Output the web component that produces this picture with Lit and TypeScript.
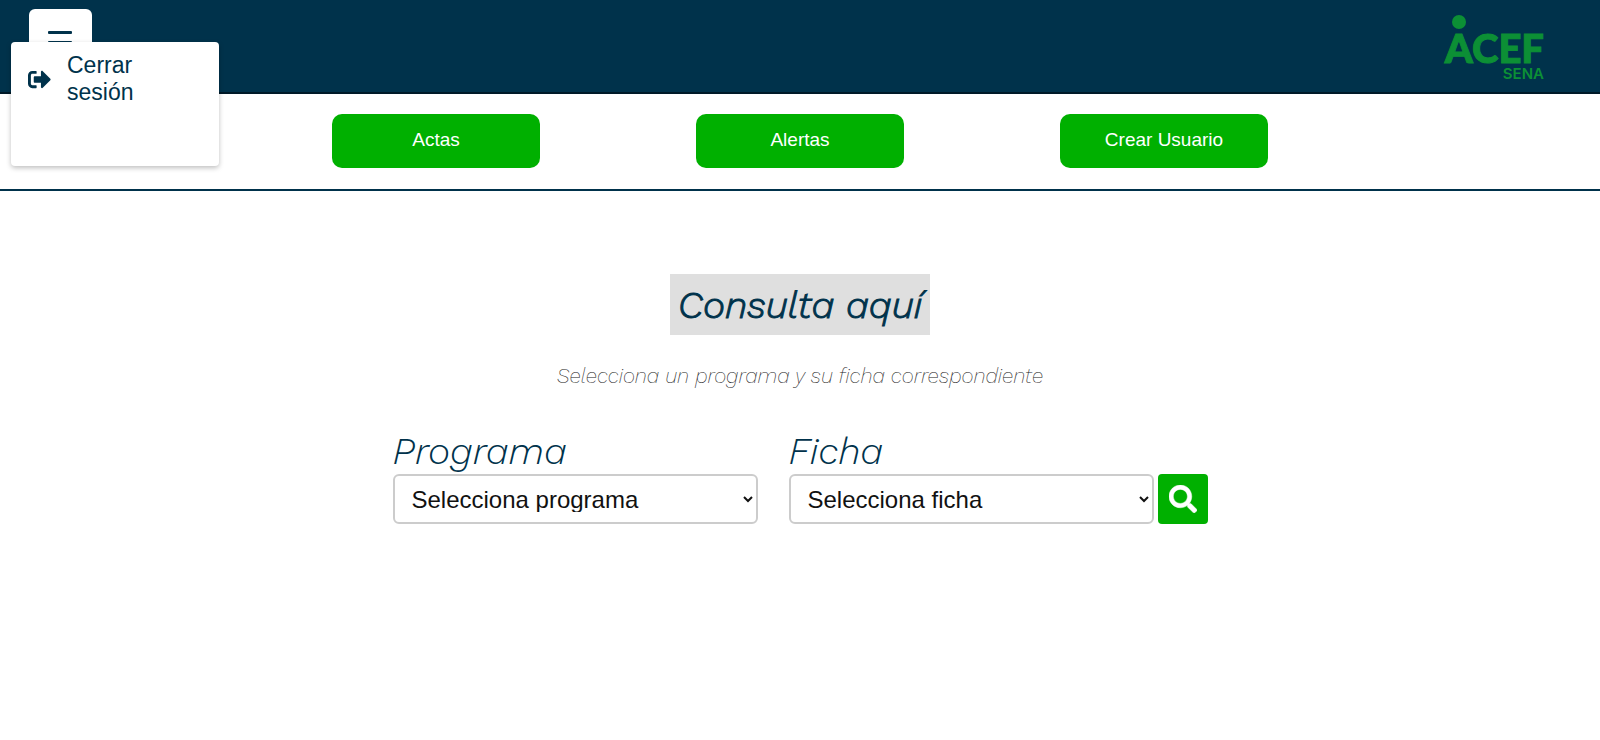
import { LitElement, html, css, svg } from "lit";
import { customElement, state } from "lit/decorators.js";

@customElement("acef-logo")
export class AcefLogo extends LitElement {
  static styles = css`
    :host {
      display: flex;
      flex-direction: column;
      align-items: flex-end;
      color: #0c8f35;
    }
    .dot {
      width: 14px;
      height: 14px;
      margin-left: 7px;
      align-self: flex-start;
      border-radius: 50%;
      background: currentColor;
    }
    .name {
      font-family: Lato, sans-serif;
      font-weight: 900;
      font-size: 40px;
      line-height: 38px;
      -webkit-text-stroke: 1px currentColor;
    }
    .org {
      font-family: Inter, sans-serif;
      font-weight: 600;
      font-size: 15px;
      line-height: 14px;
    }
  `;

  render() {
    return html`
      <span class="dot"></span>
      <span class="name">ACEF</span>
      <span class="org">SENA</span>
    `;
  }
}

@customElement("app-root")
export class AppRoot extends LitElement {
  @state() private menuOpen = true;

  private links = ["Actas", "Alertas", "Crear Usuario"];

  static styles = css`
    :host {
      display: block;
      min-height: 100vh;
      background: #fff;
      font-family: "Liberation Sans", Arial, sans-serif;
      color: #00324b;
    }
    * {
      box-sizing: border-box;
    }
    .header {
      position: relative;
      display: flex;
      justify-content: space-between;
      align-items: flex-start;
      height: 94px;
      padding: 9px 56px 0 29px;
      background: #00324b;
      border-bottom: 2px solid #001a28;
    }
    .logo {
      margin-top: 6px;
    }
    .toggle {
      width: 63px;
      height: 67px;
      padding: 0 20px 0 19px;
      border: 0;
      border-radius: 6px;
      background: #fff;
      cursor: pointer;
    }
    .bars {
      display: grid;
      gap: 7px;
    }
    .bar {
      height: 3px;
      border-radius: 1px;
      background: #00324b;
    }
    .menu {
      position: absolute;
      top: 42px;
      left: 11px;
      width: 208px;
      height: 124px;
      padding: 10px 17px;
      border-radius: 4px;
      background: #fff;
      box-shadow: 0 2px 5px rgba(0, 0, 0, 0.25);
    }
    .logout {
      display: flex;
      align-items: center;
      gap: 16px;
      color: #00324b;
      font-size: 23px;
      line-height: 27px;
      text-decoration: none;
    }
    .logout-text {
      width: min-content;
    }
    .exit {
      width: 23px;
      height: 23px;
      flex: none;
      fill: currentColor;
    }
    .nav {
      display: flex;
      justify-content: space-evenly;
      padding: 20px 11% 21px;
      border-bottom: 2px solid #00324b;
    }
    .nav-button {
      width: 208px;
      height: 54px;
      padding: 0 0 2px;
      border: 0;
      border-radius: 10px;
      background: #00b000;
      color: #fff;
      font: 19px "Liberation Sans", Arial, sans-serif;
      cursor: pointer;
    }
    .main {
      display: flex;
      flex-direction: column;
      align-items: center;
      padding: 83px 24px 0;
      font-family: "Work Sans", Inter, sans-serif;
      font-style: italic;
    }
    .title {
      margin: 0;
      padding: 2px 8px 0;
      background: #dfdfdf;
      font-size: 38px;
      font-weight: 300;
      line-height: 59px;
      -webkit-text-stroke: 1px currentColor;
    }
    .lead {
      margin: 28px 0 0;
      color: #222;
      font-size: 21px;
      font-weight: 200;
      line-height: 26px;
    }
    .form {
      display: flex;
      align-items: flex-end;
      width: 100%;
      max-width: 815px;
      margin-top: 40px;
    }
    .field {
      display: flex;
      flex: 1;
      flex-direction: column;
    }
    .field + .field {
      margin-left: 31px;
    }
    .label {
      font-size: 38px;
      font-weight: 300;
      line-height: 45px;
    }
    .select {
      width: 100%;
      height: 50px;
      padding: 9px 0 10px 13px;
      border: 2px solid #ccc;
      border-radius: 6px;
      background: #fff;
      color: #111;
      font: 24px "Liberation Sans", Arial, sans-serif;
    }
    .search {
      display: grid;
      place-items: center;
      width: 50px;
      height: 50px;
      margin-left: 4px;
      padding: 0;
      border: 0;
      border-radius: 4px;
      background: #00b000;
      color: #fff;
      cursor: pointer;
    }
    .glass {
      width: 28px;
      height: 28px;
      fill: currentColor;
      stroke: currentColor;
      stroke-width: 8px;
    }
  `;

  private exitIcon = svg`
    <path d="M497 273L329 441c-15 15-41 4.500-41-17v-96H152c-13.300 0-24-10.700-24-24v-96c0-13.300 10.700-24 24-24h136V88c0-21.400 25.900-32 41-17l168 168c9.300 9.400 9.300 24.600 0 34zM192 436v-40c0-6.600-5.400-12-12-12H96c-17.700 0-32-14.300-32-32V160c0-17.700 14.300-32 32-32h84c6.600 0 12-5.400 12-12V76c0-6.600-5.400-12-12-12H96c-53 0-96 43-96 96v192c0 53 43 96 96 96h84c6.600 0 12-5.400 12-12z"/>`;

  private searchIcon = svg`
    <path d="M505 442.700L405.300 343c-4.500-4.500-10.600-7-17-7H372c27.600-35.300 44-79.700 44-128C416 93.100 322.900 0 208 0S0 93.100 0 208s93.100 208 208 208c48.300 0 92.700-16.400 128-44v16.300c0 6.400 2.500 12.500 7 17l99.700 99.700c9.400 9.400 24.600 9.400 33.900 0l28.300-28.300c9.400-9.400 9.400-24.600.1-34zM208 336c-70.700 0-128-57.200-128-128 0-70.700 57.200-128 128-128 70.700 0 128 57.200 128 128 0 70.700-57.200 128-128 128z"/>`;

  private toggleMenu() {
    this.menuOpen = !this.menuOpen;
  }

  render() {
    return html`
      <header class="header">
        <button
          class="toggle"
          type="button"
          aria-label="Menú"
          aria-expanded=${this.menuOpen}
          @click=${this.toggleMenu}
        >
          <span class="bars">
            <span class="bar"></span>
            <span class="bar"></span>
            <span class="bar"></span>
          </span>
        </button>
        <acef-logo class="logo"></acef-logo>
        ${this.menuOpen
          ? html`<div class="menu">
              <a class="logout" href="#">
                <svg class="exit" viewBox="0 0 512 512" aria-hidden="true">${this.exitIcon}</svg>
                <span class="logout-text">Cerrar sesión</span>
              </a>
            </div>`
          : null}
      </header>
      <nav class="nav">
        ${this.links.map(
          (name) => html`<button class="nav-button" type="button">${name}</button>`
        )}
      </nav>
      <main class="main">
        <h1 class="title">Consulta aquí</h1>
        <p class="lead">Selecciona un programa y su ficha correspondiente</p>
        <form class="form" @submit=${(e: Event) => e.preventDefault()}>
          <div class="field">
            <label class="label" for="programa">Programa</label>
            <select class="select" id="programa">
              <option>Selecciona programa</option>
            </select>
          </div>
          <div class="field">
            <label class="label" for="ficha">Ficha</label>
            <select class="select" id="ficha">
              <option>Selecciona ficha</option>
            </select>
          </div>
          <button class="search" type="submit" aria-label="Buscar">
            <svg class="glass" viewBox="0 0 512 512" aria-hidden="true">${this.searchIcon}</svg>
          </button>
        </form>
      </main>
    `;
  }
}
